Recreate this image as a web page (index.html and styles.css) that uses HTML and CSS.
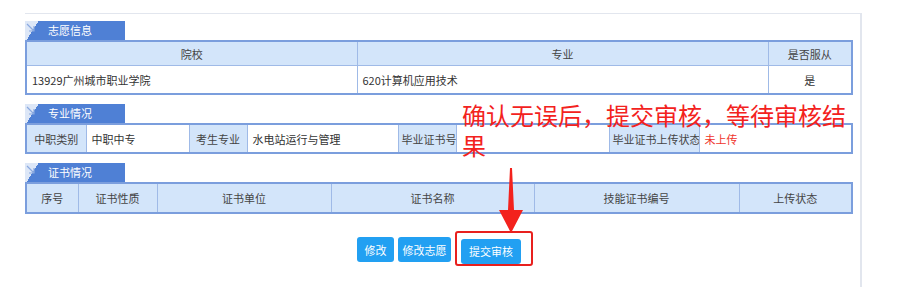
FILE: index.html
```html
<!DOCTYPE html>
<html lang="zh-CN">
<head>
    <meta charset="UTF-8">
    <title>志愿信息</title>
    <link rel="stylesheet" href="styles.css">
</head>
<body>
    <div class="page">
        <div class="panel">
            <!-- 志愿信息 -->
            <div class="section">
                <div class="tab">
                    <svg class="tab-icon" width="10" height="10" viewBox="0 0 10 10"><path d="M1 1 L8 8 M8 3 L8 8 L3 8" fill="none" stroke="#8aa9e0" stroke-width="1.2"/></svg>
                    <span>志愿信息</span>
                </div>
                <table class="grid">
                    <colgroup><col style="width:331px"><col style="width:411px"><col></colgroup>
                    <tr><th>院校</th><th>专业</th><th>是否服从</th></tr>
                    <tr class="tall"><td>13929广州城市职业学院</td><td>620计算机应用技术</td><td class="center">是</td></tr>
                </table>
            </div>

            <!-- 专业情况 -->
            <div class="section">
                <div class="tab">
                    <svg class="tab-icon" width="10" height="10" viewBox="0 0 10 10"><path d="M1 1 L8 8 M8 3 L8 8 L3 8" fill="none" stroke="#8aa9e0" stroke-width="1.2"/></svg>
                    <span>专业情况</span>
                </div>
                <table class="grid info">
                    <colgroup>
                        <col style="width:60px"><col style="width:103px"><col style="width:58px"><col style="width:151px">
                        <col style="width:58px"><col style="width:153px"><col style="width:90px"><col>
                    </colgroup>
                    <tr>
                        <th>中职类别</th><td>中职中专</td>
                        <th>考生专业</th><td>水电站运行与管理</td>
                        <th>毕业证书号</th><td></td>
                        <th>毕业证书上传状态</th><td class="warn">未上传</td>
                    </tr>
                </table>
            </div>

            <!-- 证书情况 -->
            <div class="section">
                <div class="tab">
                    <svg class="tab-icon" width="10" height="10" viewBox="0 0 10 10"><path d="M1 1 L8 8 M8 3 L8 8 L3 8" fill="none" stroke="#8aa9e0" stroke-width="1.2"/></svg>
                    <span>证书情况</span>
                </div>
                <table class="grid certs">
                    <colgroup>
                        <col style="width:52px"><col style="width:79px"><col style="width:174px">
                        <col style="width:203px"><col style="width:205px"><col>
                    </colgroup>
                    <tr><th>序号</th><th>证书性质</th><th>证书单位</th><th>证书名称</th><th>技能证书编号</th><th>上传状态</th></tr>
                </table>
            </div>

            <div class="actions">
                <button class="btn btn-short">修改</button>
                <button class="btn">修改志愿</button>
                <span class="mark"><button class="btn btn-submit">提交审核</button></span>
            </div>
        </div>

        <!-- annotation -->
        <div class="note">
            <span class="note-line">确认无误后，提交审核，等待审核结</span>
            <span class="note-line">果</span>
        </div>
        <svg class="arrow" width="26" height="66" viewBox="0 0 26 66">
            <polygon points="12,0 14,0 16,42 25,42 13,65 1,42 10,42" fill="#f3221d"/>
        </svg>
    </div>
</body>
</html>
```

FILE: styles.css
```css
body {
    margin: 0;
    font-family: "Noto Sans CJK SC", "Noto Sans", sans-serif;
    background: #fff;
    color: #333;
}
.page {
    position: relative;
    width: 901px;
    height: 305px;
    box-sizing: border-box;
    padding: 13px 0 0 25px;
}
.panel {
    width: 837px;
    height: 274px;
    box-sizing: border-box;
    border-top: 1px solid #e2e6ee;
    border-right: 2px solid #e2e6ee;
    padding: 7px 9px 0 0;
}
.section {
    margin-bottom: 9px;
}
.tab {
    width: 100px;
    height: 19px;
    display: flex;
    align-items: center;
    background: linear-gradient(122deg, #dde7f7 11.5px, #4f80d5 11.5px);
    color: #fff;
    font-size: 11px;
}
.tab-icon {
    align-self: flex-start;
    margin: 2px 0 0 1px;
}
.tab span {
    margin-left: 12px;
    line-height: 19px;
}
.grid {
    width: 828px;
    border-collapse: collapse;
    table-layout: fixed;
    border: 2px solid #7b9edd;
    font-size: 11px;
}
.grid th, .grid td {
    border: 1px solid #9fbae7;
    padding: 0 5px;
    height: 23px;
    white-space: nowrap;
    overflow: hidden;
}
.grid th {
    background: #d3e5fa;
    font-weight: normal;
    color: #444;
    text-align: center;
}
.grid td {
    background: #fff;
}
.grid tr.tall td {
    height: 27px;
}
.grid .center {
    text-align: center;
}
.info th, .info td {
    height: 27px;
}
.info th {
    padding: 0 3px;
}
.certs th {
    height: 28px;
}
.warn {
    color: #f0352c;
}
.actions {
    margin-top: 17px;
    padding-left: 12px;
    display: flex;
    justify-content: center;
    align-items: flex-start;
    gap: 4px;
    width: 828px;
    box-sizing: border-box;
}
.btn {
    height: 25px;
    width: 53px;
    margin-top: 6px;
    border: none;
    border-radius: 3px;
    background: #22a0f2;
    color: #fff;
    font-family: inherit;
    font-size: 11px;
    padding: 0;
    cursor: pointer;
}
.btn-short {
    width: 37px;
}
.mark {
    display: block;
    width: 78px;
    height: 35px;
    box-sizing: border-box;
    border: 2px solid #e8201e;
    border-radius: 3px;
    padding: 4px 0 0 4px;
}
.btn-submit {
    width: 60px;
    margin-top: 0;
}
.note {
    position: absolute;
    left: 462px;
    top: 100px;
    font-size: 24px;
    line-height: 30px;
    color: #f3221d;
}
.note-line {
    display: block;
    width: fit-content;
    white-space: nowrap;
}
.arrow {
    position: absolute;
    left: 498px;
    top: 168px;
}
```
